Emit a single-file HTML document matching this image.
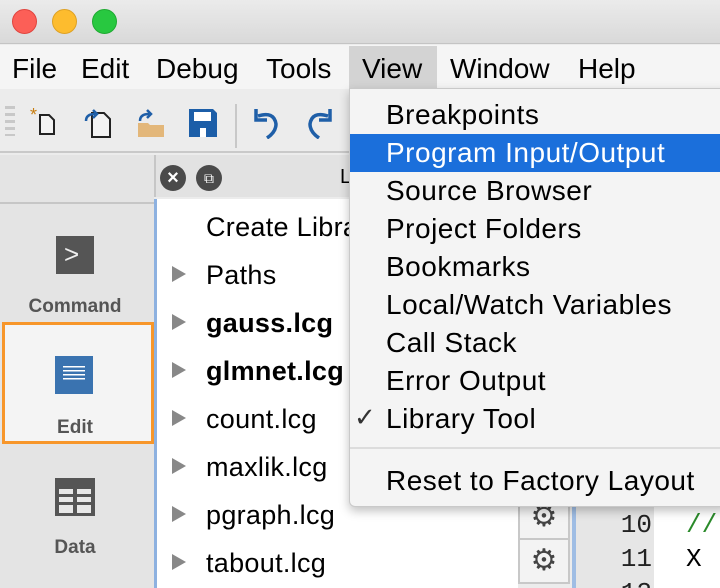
<!DOCTYPE html>
<html style="width:720px;height:588px;overflow:hidden"><head><style>
*{margin:0;padding:0;box-sizing:border-box}
body{width:720px;height:588px;overflow:hidden;position:relative;background:#ececec;font-family:"Liberation Sans",sans-serif;color:#000}
.a{position:absolute}
.t{font-size:28px;white-space:nowrap}
.dot{position:absolute;width:25px;height:25px;border-radius:50%;top:9px}
.tri{position:absolute;left:172px;width:0;height:0;border-left:14px solid #888;border-top:8px solid transparent;border-bottom:8px solid transparent}
.item{position:absolute;left:206px;font-size:27px;letter-spacing:0.3px;white-space:nowrap}
.mi{position:absolute;left:386px;font-size:28px;letter-spacing:0.5px;white-space:nowrap}
.gear{position:absolute;left:518px;width:52px;height:46px;border:2px solid #c8c8c8;background:#f3f3f3;color:#444;font-size:30px;text-align:center;line-height:42px}
.ln{position:absolute;right:68px;font-family:"Liberation Mono",monospace;font-size:26px;color:#222}
</style></head><body>
<div class="a" style="left:0;top:0;width:720px;height:44px;background:linear-gradient(#ebebeb,#d9d9d9);border-bottom:1px solid #c4c4c4"></div>
<div class="dot" style="left:12px;background:#fc5f57;border:1px solid #e0443e"></div>
<div class="dot" style="left:52px;background:#fdbc2e;border:1px solid #dea123"></div>
<div class="dot" style="left:92px;background:#28c840;border:1px solid #1eaa31"></div>
<div class="a" style="left:0;top:45px;width:720px;height:44px;background:#f5f5f5"></div>
<div class="a" style="left:349px;top:46px;width:88px;height:43px;background:#d3d3d3"></div>
<div class="a t" style="left:12px;top:53px">File</div>
<div class="a t" style="left:81px;top:53px">Edit</div>
<div class="a t" style="left:156px;top:53px">Debug</div>
<div class="a t" style="left:266px;top:53px">Tools</div>
<div class="a t" style="left:362px;top:53px">View</div>
<div class="a t" style="left:450px;top:53px">Window</div>
<div class="a t" style="left:578px;top:53px">Help</div>
<!-- toolbar -->
<div class="a" style="left:0;top:89px;width:720px;height:64px;background:#ececec;border-bottom:2px solid #c9c9c9"></div>
<div class="a" style="left:5px;top:106px;width:10px;height:30px;background:repeating-linear-gradient(#c8c8c8 0 3px,transparent 3px 7px)"></div>
<svg class="a" style="left:30px;top:105px" width="32" height="32"><text x="0" y="16" fill="#c77d10" font-size="18" font-family="Liberation Sans">*</text><path d="M10 10h9l5 5v14H10z" fill="#f3f3f3" stroke="#222" stroke-width="2"/></svg>
<svg class="a" style="left:82px;top:105px" width="34" height="34"><path d="M10 8h12l6 6v18H10z" fill="#f3f3f3" stroke="#222" stroke-width="2"/><path d="M4 16q0-7 9-7" fill="none" stroke="#1f5fa8" stroke-width="2.5"/><path d="M11 5l4 4-4 4" fill="none" stroke="#1f5fa8" stroke-width="2.5"/></svg>
<svg class="a" style="left:135px;top:105px" width="34" height="34"><path d="M3 18h10l2 2h14v12H3z" fill="#e3b77a"/><path d="M5 16q0-7 9-7" fill="none" stroke="#1f5fa8" stroke-width="2.5"/><path d="M12 5l4 4-4 4" fill="none" stroke="#1f5fa8" stroke-width="2.5"/></svg>
<svg class="a" style="left:188px;top:108px" width="30" height="30"><path d="M1 1h24l4 4v24H1z" fill="#1c5ea8"/><rect x="6" y="4" width="17" height="9" fill="#fff"/><rect x="12" y="20" width="6" height="9" fill="#fff"/></svg>
<div class="a" style="left:235px;top:104px;width:2px;height:44px;background:#c8c8c8"></div>
<svg class="a" style="left:252px;top:107px" width="30" height="32"><path d="M6 9q16-5 18 8q0 8-9 14" fill="none" stroke="#1f5fa8" stroke-width="3.5"/><path d="M4 2v11h11" fill="none" stroke="#1f5fa8" stroke-width="3.5"/></svg>
<svg class="a" style="left:304px;top:107px" width="30" height="32"><path d="M24 9q-16-5-18 8q0 8 9 14" fill="none" stroke="#1f5fa8" stroke-width="3.5"/><path d="M26 2v11H15" fill="none" stroke="#1f5fa8" stroke-width="3.5"/></svg>
<!-- left sidebar -->
<div class="a" style="left:0;top:155px;width:154px;height:433px;background:#e4e4e4"></div>
<div class="a" style="left:0;top:202px;width:154px;height:2px;background:#c6c6c6"></div>
<div class="a" style="left:56px;top:236px;width:38px;height:38px;background:#555"></div>
<div class="a" style="left:64px;top:239px;color:#eee;font-size:26px">&gt;</div>
<div class="a" style="left:0;top:296px;width:150px;text-align:center;font-weight:bold;font-size:19px;color:#555">Command</div>
<div class="a" style="left:2px;top:322px;width:152px;height:122px;border:3px solid #f7962a;background:#f4f4f4"></div>
<div class="a" style="left:55px;top:356px;width:38px;height:38px;background:#3a73b0"></div>
<div class="a" style="left:63px;top:366px;width:22px;height:14px;background:repeating-linear-gradient(#fff 0 1.5px,transparent 1.5px 4px)"></div>
<div class="a" style="left:0;top:417px;width:150px;text-align:center;font-weight:bold;font-size:19px;color:#555">Edit</div>
<div class="a" style="left:55px;top:478px;width:40px;height:38px;background:#555"></div>
<div class="a" style="left:59px;top:489px;width:32px;height:24px;background:repeating-linear-gradient(90deg,#e8e8e8 0 14px,transparent 14px 18px)"></div>
<div class="a" style="left:55px;top:494px;width:40px;height:3px;background:#555"></div>
<div class="a" style="left:55px;top:502px;width:40px;height:3px;background:#555"></div>
<div class="a" style="left:0;top:537px;width:150px;text-align:center;font-weight:bold;font-size:19px;color:#555">Data</div>
<!-- panel header -->
<div class="a" style="left:154px;top:155px;width:566px;height:42px;background:#e2e2e2;border-left:2px solid #c6c6c6"></div>
<div class="a" style="left:160px;top:165px;width:26px;height:26px;border-radius:50%;background:#4a4a4a;color:#fff;font-size:20px;font-weight:bold;text-align:center;line-height:26px">×</div>
<div class="a" style="left:196px;top:165px;width:26px;height:26px;border-radius:50%;background:#4a4a4a;color:#fff;font-size:14px;text-align:center;line-height:26px">⧉</div>
<div class="a" style="left:340px;top:166px;font-size:20px">L</div>
<!-- tree -->
<div class="a" style="left:154px;top:199px;width:364px;height:389px;background:#fff;border-left:3px solid #8db1e0"></div>
<div class="item" style="top:212px">Create Library</div>
<div class="tri" style="top:266px"></div><div class="item" style="top:260px">Paths</div>
<div class="tri" style="top:314px"></div><div class="item" style="top:308px;font-weight:bold">gauss.lcg</div>
<div class="tri" style="top:362px"></div><div class="item" style="top:356px;font-weight:bold">glmnet.lcg</div>
<div class="tri" style="top:410px"></div><div class="item" style="top:404px">count.lcg</div>
<div class="tri" style="top:458px"></div><div class="item" style="top:452px">maxlik.lcg</div>
<div class="tri" style="top:506px"></div><div class="item" style="top:500px">pgraph.lcg</div>
<div class="tri" style="top:554px"></div><div class="item" style="top:548px">tabout.lcg</div>
<!-- gear column & code -->
<div class="a" style="left:518px;top:199px;width:54px;height:389px;background:#ececec"></div>
<div class="gear" style="top:494px">⚙</div>
<div class="gear" style="top:538px">⚙</div>
<div class="a" style="left:572px;top:199px;width:4px;height:389px;background:#9fbde4"></div>
<div class="a" style="left:576px;top:199px;width:78px;height:389px;background:#e6e6e6"></div>
<div class="a" style="left:654px;top:199px;width:66px;height:389px;background:#fff"></div>
<div class="ln" style="top:510px">10</div>
<div class="ln" style="top:544px">11</div>
<div class="ln" style="top:578px">12</div>
<div class="a" style="left:686px;top:510px;font-family:'Liberation Mono',monospace;font-size:26px;color:#2a8a2a">//</div>
<div class="a" style="left:686px;top:544px;font-family:'Liberation Mono',monospace;font-size:26px">X</div>
<!-- dropdown -->
<div class="a" style="left:349px;top:88px;width:380px;height:419px;background:#f4f4f4;border:1px solid #c9c9c9;border-radius:0 0 6px 6px;box-shadow:0 4px 10px rgba(0,0,0,.25)"></div>
<div class="a" style="left:350px;top:134px;width:370px;height:38px;background:#1b6fdb"></div>
<div class="mi" style="top:99px">Breakpoints</div>
<div class="mi" style="top:137px;color:#fff">Program Input/Output</div>
<div class="mi" style="top:175px">Source Browser</div>
<div class="mi" style="top:213px">Project Folders</div>
<div class="mi" style="top:251px">Bookmarks</div>
<div class="mi" style="top:289px">Local/Watch Variables</div>
<div class="mi" style="top:327px">Call Stack</div>
<div class="mi" style="top:365px">Error Output</div>
<div class="mi" style="top:403px">Library Tool</div>
<div class="a" style="left:354px;top:402px;font-size:26px;color:#333">✓</div>
<div class="a" style="left:350px;top:447px;width:370px;height:2px;background:#dcdcdc"></div>
<div class="mi" style="top:465px">Reset to Factory Layout</div>
</body></html>
